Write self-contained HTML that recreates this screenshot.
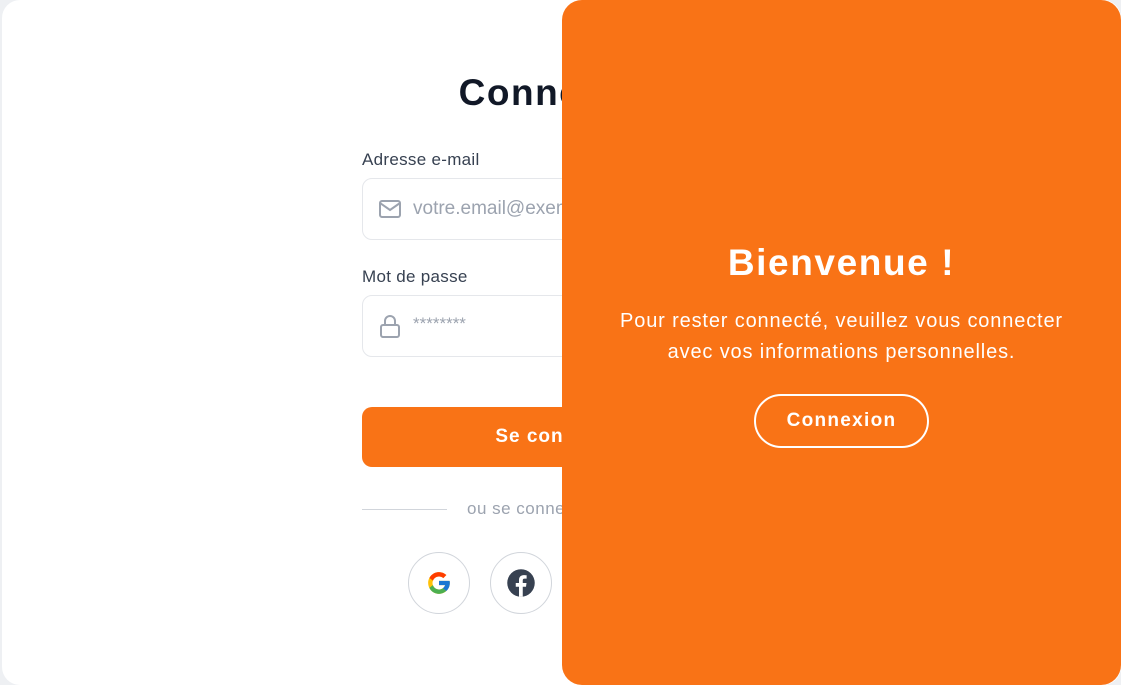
<!DOCTYPE html>
<html><head><meta charset="utf-8"><style>
*{box-sizing:border-box;margin:0;padding:0}
body{width:1121px;height:685px;background:#eef0f3;font-family:"Liberation Sans",sans-serif;position:relative;overflow:hidden}
.card{position:absolute;left:2px;top:0;width:1119px;height:685px;background:#fff;border-radius:18px}
.h{position:absolute;left:362px;width:398px;top:72px;text-align:center;font-size:37px;font-weight:bold;color:#111827;letter-spacing:1.5px}
.lab{position:absolute;left:362px;font-size:17px;color:#374151;letter-spacing:.3px}
.inp{position:absolute;left:362px;width:398px;height:62px;border:1px solid #e5e7eb;border-radius:10px}
.inp span{position:absolute;left:50px;top:19px;font-size:19px;color:#9ca3af}
.btn{position:absolute;left:362px;top:407px;width:398px;height:60px;background:#f97316;border-radius:10px;color:#fff;font-weight:bold;font-size:19px;text-align:center;line-height:60px;letter-spacing:1px}
.line{position:absolute;top:509px;height:1px;background:#d1d5db}
.ou{position:absolute;left:467px;top:499px;font-size:17px;color:#9ca3af;letter-spacing:.5px}
.soc{position:absolute;top:552px;width:62px;height:62px;border:1px solid #d1d5db;border-radius:50%;display:flex;align-items:center;justify-content:center}
.panel{position:absolute;left:562px;top:0;width:559px;height:685px;background:#f97316;border-radius:20px;color:#fff;text-align:center}
.panel h2{position:absolute;left:0;right:0;top:242px;font-size:37px;font-weight:bold;letter-spacing:1.6px}
.panel p{position:absolute;left:-20px;right:-20px;top:306px;font-size:20px;line-height:31px;letter-spacing:.85px}
.cx{position:absolute;left:192px;top:394px;width:175px;height:54px;border:2px solid #fff;border-radius:27px;font-weight:bold;font-size:19px;line-height:50px;letter-spacing:1.3px}
</style></head><body>
<div class="card"></div>
<div class="h">Connexion</div>
<div class="lab" style="top:150px">Adresse e-mail</div>
<div class="inp" style="top:178px">
<svg style="position:absolute;left:15px;top:19px" width="24" height="22" viewBox="0 0 24 22" fill="none" stroke="#9ca3af" stroke-width="2"><rect x="2" y="3" width="20" height="16" rx="2"/><path d="M2 5l10 7 10-7"/></svg>
<span>votre.email@exemple.com</span></div>
<div class="lab" style="top:267px">Mot de passe</div>
<div class="inp" style="top:295px">
<svg style="position:absolute;left:15px;top:17px" width="24" height="26" viewBox="0 0 24 26" fill="none" stroke="#9ca3af" stroke-width="2"><rect x="3" y="12" width="18" height="12" rx="2"/><path d="M7 12V8a5 5 0 0 1 10 0v4"/></svg>
<span style="top:18px;font-size:17px">********</span></div>
<div class="btn">Se connecter</div>
<div class="line" style="left:362px;width:85px"></div>
<div class="ou">ou se connecter avec</div>
<div class="soc" style="left:408px"><svg width="26" height="26" viewBox="0 0 48 48"><path fill="#FFC107" d="M43.6 20H24v8h11.3C33.7 33 29.3 36 24 36c-6.6 0-12-5.4-12-12s5.4-12 12-12c3 0 5.8 1.1 7.9 3l5.7-5.7C34 6.1 29.3 4 24 4 13 4 4 13 4 24s9 20 20 20 20-9 20-20c0-1.3-.1-2.7-.4-4z"/><path fill="#FF3D00" d="M6.3 14.7l6.6 4.8C14.7 15.1 19 12 24 12c3 0 5.8 1.1 7.9 3l5.7-5.7C34 6.1 29.3 4 24 4 16.3 4 9.7 8.3 6.3 14.7z"/><path fill="#4CAF50" d="M24 44c5.2 0 9.9-2 13.4-5.2l-6.2-5.2C29.2 35.1 26.7 36 24 36c-5.2 0-9.6-3.3-11.3-8l-6.5 5C9.5 39.6 16.2 44 24 44z"/><path fill="#1976D2" d="M43.6 20H24v8h11.3c-.8 2.2-2.2 4.2-4.1 5.6l6.2 5.2C37 39.2 44 34 44 24c0-1.3-.1-2.7-.4-4z"/></svg></div>
<div class="soc" style="left:490px"><svg width="30" height="30" viewBox="0 0 24 24"><circle cx="12" cy="12" r="11" fill="#374151"/><path fill="#fff" d="M13.4 23v-8h2.6l.4-3h-3V10c0-.9.3-1.5 1.5-1.5h1.6V5.8c-.3 0-1.2-.1-2.3-.1-2.3 0-3.8 1.4-3.8 3.9V12H7.8v3h2.6v8z"/></svg></div>
<div class="panel">
<h2>Bienvenue !</h2>
<p>Pour rester connecté, veuillez vous connecter<br>avec vos informations personnelles.</p>
<div class="cx">Connexion</div>
</div>
</body></html>
